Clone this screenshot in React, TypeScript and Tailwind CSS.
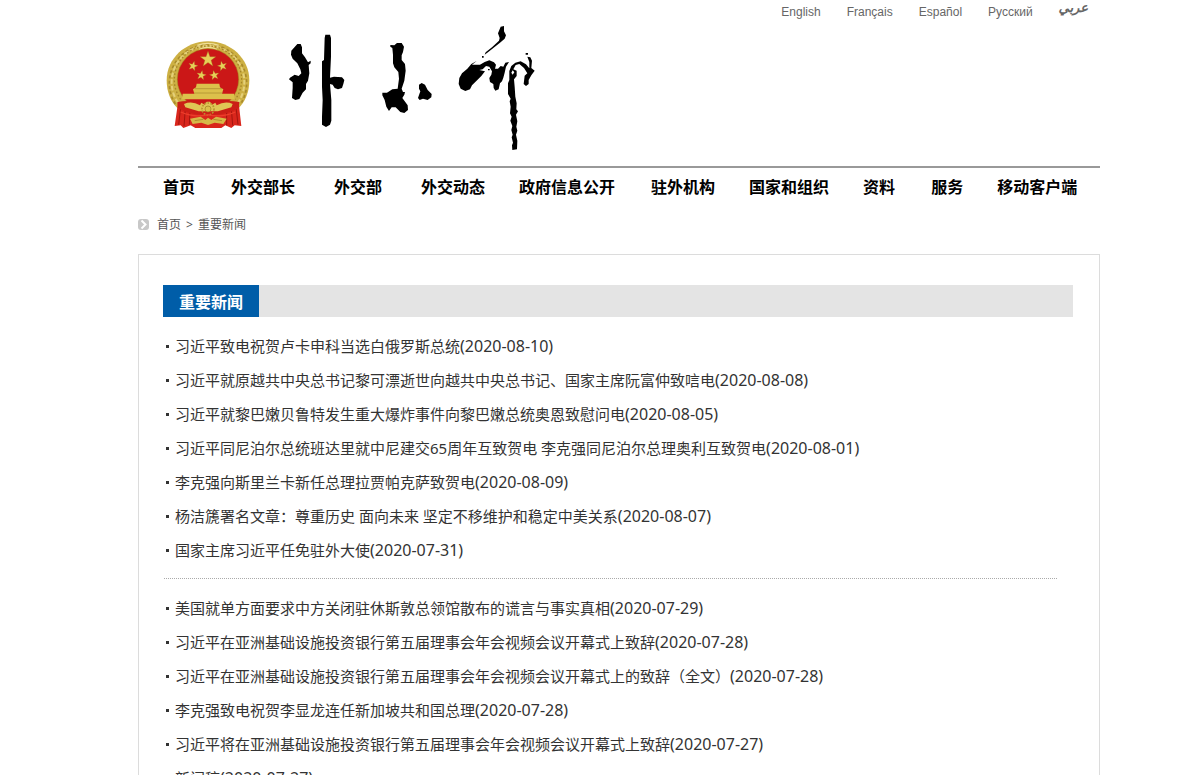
const languages = ['English', 'Français', 'Español', 'Русский'];

const navItems = [
  { label: '首页', gap: '' },
  { label: '外交部长', gap: 'ml-9' },
  { label: '外交部', gap: 'ml-[39px]' },
  { label: '外交动态', gap: 'ml-[39px]' },
  { label: '政府信息公开', gap: 'ml-[34px]' },
  { label: '驻外机构', gap: 'ml-9' },
  { label: '国家和组织', gap: 'ml-[34px]' },
  { label: '资料', gap: 'ml-[34px]' },
  { label: '服务', gap: 'ml-9' },
  { label: '移动客户端', gap: 'ml-[34px]' },
];

type Item = { title: string; date: string };

const firstGroup: Item[] = [
  { title: '习近平致电祝贺卢卡申科当选白俄罗斯总统', date: '2020-08-10' },
  { title: '习近平就原越共中央总书记黎可漂逝世向越共中央总书记、国家主席阮富仲致唁电', date: '2020-08-08' },
  { title: '习近平就黎巴嫩贝鲁特发生重大爆炸事件向黎巴嫩总统奥恩致慰问电', date: '2020-08-05' },
  { title: '习近平同尼泊尔总统班达里就中尼建交65周年互致贺电 李克强同尼泊尔总理奥利互致贺电', date: '2020-08-01' },
  { title: '李克强向斯里兰卡新任总理拉贾帕克萨致贺电', date: '2020-08-09' },
  { title: '杨洁篪署名文章：尊重历史 面向未来 坚定不移维护和稳定中美关系', date: '2020-08-07' },
  { title: '国家主席习近平任免驻外大使', date: '2020-07-31' },
];

const secondGroup: Item[] = [
  { title: '美国就单方面要求中方关闭驻休斯敦总领馆散布的谎言与事实真相', date: '2020-07-29' },
  { title: '习近平在亚洲基础设施投资银行第五届理事会年会视频会议开幕式上致辞', date: '2020-07-28' },
  { title: '习近平在亚洲基础设施投资银行第五届理事会年会视频会议开幕式上的致辞（全文）', date: '2020-07-28' },
  { title: '李克强致电祝贺李显龙连任新加坡共和国总理', date: '2020-07-28' },
  { title: '习近平将在亚洲基础设施投资银行第五届理事会年会视频会议开幕式上致辞', date: '2020-07-27' },
  { title: '新闻稿', date: '2020-07-27' },
];

const STAR = 'M0-10 2.4-3.2 9.5-3.1 3.8 1.2 5.9 8.1 0 4-5.9 8.1-3.8 1.2-9.5-3.1-2.4-3.2Z';

function Emblem() {
  return (
    <svg className="h-[90px] w-[84px] shrink-0" viewBox="34 34 252 270" role="img" aria-label="国徽">
      <path d="M160 38C228 38 284 90 284 155 284 190 272 220 250 240H70C48 220 36 190 36 155 36 90 92 38 160 38Z" fill="#cdb043" />
      <path d="M62 226A116 116 0 1 1 258 226" fill="none" stroke="#a88a2c" strokeWidth="5" strokeDasharray="9 7" />
      <path d="M70 222A109 109 0 1 1 250 222" fill="none" stroke="#e4d07a" strokeWidth="6" strokeDasharray="14 6" />
      <path d="M78 212A101 101 0 1 1 242 212" fill="none" stroke="#a58528" strokeWidth="4" strokeDasharray="5 6" />
      <path d="M128 50Q160 38 192 50M134 62Q160 50 186 62" fill="none" stroke="#efe09a" strokeWidth="4" />
      <path d="M70 222 60 292 78 290 86 298 108 290 122 298 200 298 212 290 230 298 240 290 260 292 252 222Z" fill="#d9261c" />
      <path d="M78 236 72 288M92 240 88 292M106 246 104 288M216 246 216 290M230 240 234 290M244 236 250 288" stroke="#a3150e" strokeWidth="3" />
      <ellipse cx="160" cy="152" rx="92" ry="92" fill="#cb1717" stroke="#a3831c" strokeWidth="1.5" />
      <g fill="#e6cf58" stroke="#a27b18" strokeWidth=".4">
        <path d={STAR} transform="translate(160 92) scale(2.45)" />
        <path d={STAR} transform="translate(115 112) rotate(15) scale(1.5)" />
        <path d={STAR} transform="translate(203 112) rotate(-15) scale(1.5)" />
        <path d={STAR} transform="translate(140 140) rotate(10) scale(1.5)" />
        <path d={STAR} transform="translate(179 140) rotate(-10) scale(1.5)" />
      </g>
      <path d="M126 165H194L196 176 206 182 202 195H238L240 212H82L84 195H119L115 182 124 176Z" fill="#dcc14b" />
      <path d="M120 180H202M118 193H204" stroke="#a88a2c" strokeWidth="2" />
      <path d="M68 220Q110 212 134 224H186Q210 212 254 220L252 238Q210 262 160 258 110 262 70 238Z" fill="#cb1f16" />
      <path d="M88 226Q112 216 136 230L140 222 150 228 156 219 166 219 172 228 182 222 186 230Q212 216 234 226L230 236 190 248H132L92 236Z" fill="#dfc655" />
      <circle cx="160" cy="241" r="18" fill="none" stroke="#b6972f" strokeWidth="5" strokeDasharray="5 4" />
      <circle cx="160" cy="241" r="9" fill="#dcc14b" stroke="#9b7c20" strokeWidth="2" />
      <path d="M78 250Q120 268 160 258 202 268 242 250" fill="none" stroke="#ec3f2c" strokeWidth="4" />
      <path d="M106 270 138 264 152 274 160 267 170 274 184 264 216 270 206 286 180 282 160 289 140 282 114 286Z" fill="#d6b948" />
      <path d="M120 276 146 272M176 272 202 276" stroke="#9b7c20" strokeWidth="2" />
    </svg>
  );
}

function Calligraphy() {
  return (
    <svg className="h-[130px] w-[260px] shrink-0" viewBox="280 24 260 130" role="img" aria-label="外交部">
      <g transform="translate(280 20) scale(.3333)">
        <path d="M52 72 62 72 66 82 66 100 75 112 84 127 92 122 92 130 86 135 88 160 84 182 78 192 78 208 68 218 58 237 46 240 36 234 38 204 38 187 27 178 30 173 44 164 56 168 64 160 61 148 52 130 38 116 33 104 34 92Z" />
        <path d="M136 44H150L153 54V110L150 173 162 170 186 172 193 180 190 192 186 204 174 208 164 204 158 194 150 192 154 240V302L150 314 138 321 126 314V290L128 240 126 200V124L132 120 134 54Z" />
      </g>
      <g transform="translate(375 20) scale(.3333)">
        <path d="M46 75 58 76 66 69H80L87 80 84 96 80 106V120L90 132 92 152 88 182 80 206 84 216H90L88 224 82 234 98 256 99 270 88 279 76 276 62 262 50 262 42 273 34 260 29 240 22 226V218H36L52 208 68 206 72 176 70 156 58 142 54 130V104L52 84 46 80Z" />
        <path d="M132 194 140 189 150 194 158 210 170 222 169 232 158 240 144 236 134 240 129 234 136 214 132 206Z" />
      </g>
      <g transform="translate(450 20) scale(.3333)">
        <path d="M152 20 162 18V34L168 46 164 56 150 68 130 84 112 98 104 104 107 97 126 82 147 62 149 54 144 40Z" />
        <path d="M96 108H101V113H96ZM227 99H234V104H227ZM114 147H119V151H114Z" />
        <path d="M80 123 66 134 90 134 104 126 118 121 132 127 138 134 135 146 144 146 152 138 160 140 166 128 177 126 168 140 164 158 160 173 156 184 150 190 146 208 136 212 131 204 130 192 120 186 118 174 124 164 126 154 118 140 108 138 98 148 88 150 105 154 94 168 82 180 66 196 60 208 46 213 32 206 26 192 28 174 36 160 52 146 64 132Z" />
        <path d="M178 153 184 138 196 128 212 124 228 133 238 145V126L232 110 241 112 246 122 244 144 254 152 244 166 236 180 236 192 228 198 221 192 224 167 232 160 222 144 208 132 197 135 190 148 200 152 200 168 192 178 194 200 196 230 200 250 199 268 204 274 198 284 202 304 199 320 202 332 198 344 202 362 201 388 187 390 186 376 189 368 185 352 188 344 184 330 187 318 181 302 185 290 180 280 182 260 179 244 182 236 174 222V190L178 180Z" />
        <path d="M184 158 188 151 193 157 188 164Z" fill="#fff" />
      </g>
    </svg>
  );
}

function NewsList({ items }: { items: Item[] }) {
  return (
    <ul>
      {items.map((item) => (
        <li key={item.title} className="flex min-h-[34px] items-center gap-[6px]">
          <span className="size-[3px] shrink-0 bg-[#333]" />
          <a href="#" className="text-[15px] leading-[34px] hover:underline">
            {item.title}
            <span className="text-base leading-none">({item.date})</span>
          </a>
        </li>
      ))}
    </ul>
  );
}

export default function App() {
  return (
    <div className="min-h-screen bg-white pl-10 font-['Noto_Sans','Noto_Sans_CJK_SC',sans-serif] text-[#333]">
      <div className="mx-auto max-w-[962px]">
        <header>
          <nav
            aria-label="Languages"
            className="flex h-6 justify-end gap-[26px] pr-3 font-['Liberation_Sans',sans-serif] text-xs leading-6 text-[#666]"
          >
            {languages.map((name) => (
              <a key={name} href="#">
                {name}
              </a>
            ))}
            <a href="#" lang="ar" className="font-['DejaVu_Sans',sans-serif] text-[13px] leading-4 font-bold italic">
              عربي
            </a>
          </nav>
          <div className="flex items-start pl-7">
            <div className="pt-4">
              <Emblem />
            </div>
            <div className="pl-[30px]">
              <Calligraphy />
            </div>
          </div>
        </header>

        <nav aria-label="主导航" className="mt-3 border-t-2 border-[#999] pl-[25px]">
          <ul className="flex h-9 items-center font-['Noto_Sans_CJK_SC',sans-serif] text-base font-bold whitespace-nowrap text-black">
            {navItems.map((item) => (
              <li key={item.label} className={item.gap}>
                <a href="#">{item.label}</a>
              </li>
            ))}
          </ul>
        </nav>

        <nav aria-label="位置" className="mt-2 flex h-6 items-center gap-2 text-xs text-[#555]">
          <svg className="size-[11px]" viewBox="0 0 11 11" aria-hidden="true">
            <rect width="11" height="11" rx="3" fill="#c8c8c8" />
            <path d="M3.5 1.5 7.5 5.5 3.5 9.5" fill="none" stroke="#fff" strokeWidth="2" />
          </svg>
          <span className="flex gap-[5px] pt-[2px]">
            <a href="#">首页</a>
            <span>&gt;</span>
            <a href="#">重要新闻</a>
          </span>
        </nav>

        <main className="mt-[18px] border border-[#dcdcdc] pt-[30px] pr-[26px] pl-6">
          <div className="flex h-8 bg-[#e4e4e4]">
            <h1 className="bg-[#005da8] px-4 font-['Noto_Sans_CJK_SC',sans-serif] text-base leading-8 font-bold text-white">
              重要新闻
            </h1>
          </div>
          <div className="pt-3 pr-4 pl-[3px]">
            <NewsList items={firstGroup} />
            <hr className="-ml-[2px] mt-[11px] mb-3 border-t border-dotted border-[#aaa]" />
            <NewsList items={secondGroup} />
          </div>
        </main>
      </div>
    </div>
  );
}
